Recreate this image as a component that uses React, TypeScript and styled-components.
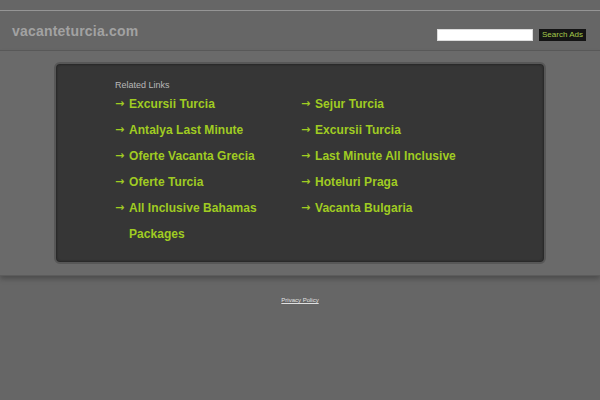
import * as React from "react";
import styled, { createGlobalStyle } from "styled-components";

const GlobalStyle = createGlobalStyle`
  html, body {
    margin: 0;
    padding: 0;
    background: #666666;
    font-family: "Liberation Sans", Arial, sans-serif;
  }
`;

const Page = styled.div`
  width: 600px;
  min-height: 400px;
  padding-top: 10px;
  box-sizing: border-box;
`;

const Header = styled.header`
  height: 39px;
  border-top: 1px solid #959595;
  border-bottom: 1px solid #5a5a5a;
  display: flex;
  align-items: center;
  justify-content: space-between;
  padding: 0 14px 0 12px;
`;

const Domain = styled.div`
  font-size: 14px;
  font-weight: bold;
  color: #a2a2a2;
  letter-spacing: 0.2px;
`;

const SearchForm = styled.form`
  display: flex;
  align-items: center;
  gap: 6px;
  margin-top: 9px;
`;

const SearchInput = styled.input`
  width: 96px;
  height: 12px;
  box-sizing: border-box;
  border: 1px solid #dcdcdc;
  background: #ffffff;
  padding: 0;
  margin: 0;
`;

const SearchButton = styled.button`
  height: 12px;
  width: 47px;
  padding: 0;
  margin: 0;
  border: none;
  background: #141414;
  color: #a3c94a;
  font-family: "Liberation Sans", Arial, sans-serif;
  font-size: 8px;
  line-height: 12px;
`;

const Band = styled.section`
  background: #6a6a6a;
  padding: 11px 54px 11px;
  border-bottom: 1px solid #5c5c5c;
  box-shadow: 0 3px 5px rgba(0, 0, 0, 0.25);
`;

const Panel = styled.div`
  height: 202px;
  box-sizing: border-box;
  background: #363636;
  border: 2px solid #575757;
  border-radius: 6px;
  box-shadow: inset 0 0 2px 1px #262626;
  padding: 16px 0 0 59px;
`;

const Title = styled.div`
  font-size: 9px;
  color: #b8b8b8;
  line-height: 10px;
  margin-bottom: 1px;
`;

const Links = styled.ul`
  list-style: none;
  margin: 0;
  padding: 0;
  display: grid;
  grid-template-columns: 186px 186px;
  grid-auto-flow: column;
  grid-template-rows: repeat(5, auto);
`;

const LinkItem = styled.li`
  display: flex;
  font-size: 12px;
  font-weight: bold;
  line-height: 26px;
  color: #a0cc22;
`;

const Arrow = styled.span`
  flex: 0 0 14px;
  font-family: "DejaVu Sans", sans-serif;
  font-size: 11px;
`;

const LinkText = styled.a`
  color: inherit;
  text-decoration: none;
  max-width: 150px;
  letter-spacing: 0.05px;
`;

const Footer = styled.footer`
  text-align: center;
  padding-top: 12px;
`;

const Privacy = styled.a`
  font-size: 6px;
  color: #e0e0e0;
  text-decoration: underline;
`;

const left = [
  "Excursii Turcia",
  "Antalya Last Minute",
  "Oferte Vacanta Grecia",
  "Oferte Turcia",
  "All Inclusive Bahamas Packages",
];
const right = [
  "Sejur Turcia",
  "Excursii Turcia",
  "Last Minute All Inclusive",
  "Hoteluri Praga",
  "Vacanta Bulgaria",
];

export default function App() {
  return (
    <Page>
      <GlobalStyle />
      <Header>
        <Domain>vacanteturcia.com</Domain>
        <SearchForm onSubmit={(e) => e.preventDefault()}>
          <SearchInput type="text" />
          <SearchButton type="submit">Search Ads</SearchButton>
        </SearchForm>
      </Header>
      <Band>
        <Panel>
          <Title>Related Links</Title>
          <Links>
            {[...left, ...right].map((label, i) => (
              <LinkItem key={i}>
                <Arrow>→</Arrow>
                <LinkText href="#">{label}</LinkText>
              </LinkItem>
            ))}
          </Links>
        </Panel>
      </Band>
      <Footer>
        <Privacy href="#">Privacy Policy</Privacy>
      </Footer>
    </Page>
  );
}
